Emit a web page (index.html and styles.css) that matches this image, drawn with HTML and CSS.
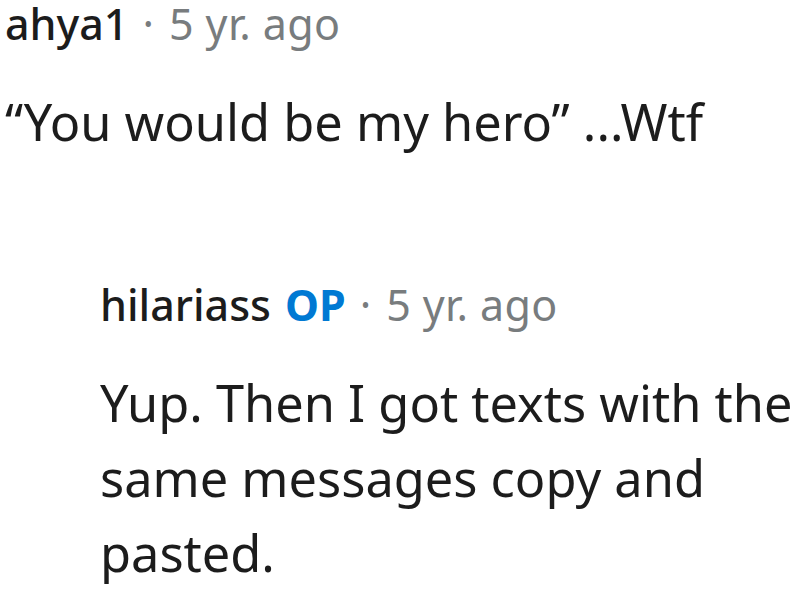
FILE: index.html
```html
<!DOCTYPE html>
<html>
<head>
<meta charset="utf-8">
<link rel="stylesheet" href="styles.css">
</head>
<body>
<div class="thread">
  <div class="comment">
    <div class="meta"><span class="author">ahya1</span><span class="dot">·</span><span class="time">5 yr. ago</span></div>
    <div class="body">“You would be my hero” ...Wtf</div>
  </div>
  <div class="comment reply">
    <div class="meta"><span class="author">hilariass</span><span class="op">OP</span><span class="dot">·</span><span class="time">5 yr. ago</span></div>
    <div class="body">Yup. Then I got texts with the same messages copy and pasted.</div>
  </div>
</div>
</body>
</html>
```
FILE: styles.css
```css
html, body {
  margin: 0;
  padding: 0;
  background: #ffffff;
}
.thread {
  padding-left: 5px;
  font-family: "Noto Sans", "Open Sans", sans-serif;
  color: #1c1c1c;
}
.meta {
  font-size: 43px;
  line-height: 48px;
  height: 48px;
  white-space: nowrap;
  display: flex;
  align-items: baseline;
}
.author {
  color: #1c1c1c;
  font-weight: 500;
}
.op {
  color: #0079d3;
  font-weight: 700;
  margin-left: 14px;
}
.dot {
  color: #787c7e;
  margin: 0 15px 0 14px;
}
.time {
  color: #787c7e;
  letter-spacing: 0.4px;
}
.body {
  margin-top: 36px;
  font-size: 50.5px;
  line-height: 75px;
}
.reply {
  margin-top: 122px;
  padding-left: 95px;
}
```
